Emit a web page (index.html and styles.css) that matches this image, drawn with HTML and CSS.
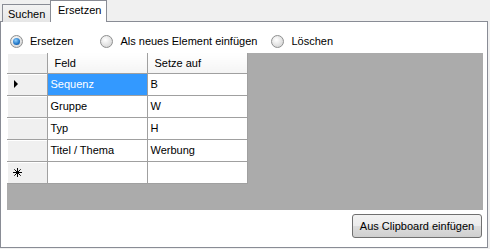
FILE: index.html
```html
<!DOCTYPE html>
<html>
<head>
<meta charset="utf-8">
<title>Ersetzen</title>
<link rel="stylesheet" href="styles.css">
</head>
<body>
<div class="tabs">
    <div class="tab">Suchen</div>
    <div class="tab active">Ersetzen</div>
</div>
<div class="panel">
    <div class="radios">
        <label class="radio checked"><span class="dot"></span>Ersetzen</label>
        <label class="radio"><span class="dot"></span>Als neues Element einfügen</label>
        <label class="radio"><span class="dot"></span>Löschen</label>
    </div>
    <div class="gridarea">
        <table class="grid">
            <tr class="head">
                <th class="rh"></th>
                <th>Feld</th>
                <th>Setze auf</th>
            </tr>
            <tr>
                <td class="rh"><span class="arrow"></span></td>
                <td class="sel">Sequenz</td>
                <td>B</td>
            </tr>
            <tr>
                <td class="rh"></td>
                <td>Gruppe</td>
                <td>W</td>
            </tr>
            <tr>
                <td class="rh"></td>
                <td>Typ</td>
                <td>H</td>
            </tr>
            <tr>
                <td class="rh"></td>
                <td>Titel / Thema</td>
                <td>Werbung</td>
            </tr>
            <tr>
                <td class="rh">
                    <svg class="star" width="9" height="9" viewBox="0 0 9 9">
                        <path d="M4.5 0V9M0 4.5H9M1.3 1.3L7.7 7.7M7.7 1.3L1.3 7.7" stroke="#000" stroke-width="1"/>
                    </svg>
                </td>
                <td></td>
                <td></td>
            </tr>
        </table>
    </div>
    <div class="footer">
        <button class="btn" type="button">Aus Clipboard einfügen</button>
    </div>
</div>
</body>
</html>
```

FILE: styles.css
```css
*{margin:0;padding:0;box-sizing:border-box}
body{
    background:#f0f0f0;
    font-family:"Liberation Sans",Arial,sans-serif;
    font-size:11px;
    color:#000;
}
.tabs{
    display:flex;
    align-items:flex-end;
    height:21px;
    padding-left:2px;
}
.tab{
    width:49px;
    height:18px;
    padding:3px 0 0 5px;
    border:1px solid #898c95;
    border-bottom:none;
    background:linear-gradient(#f3f3f3,#e6e6e6);
    margin-bottom:-1px;
    white-space:nowrap;
}
.tab.active{
    position:relative;
    z-index:1;
    width:57px;
    height:22px;
    margin-left:-1px;
    padding:3px 0 0 7px;
    background:#fff;
}
.panel{
    width:488px;
    height:227px;
    border:1px solid #898c95;
    background:#fff;
    display:flex;
    flex-direction:column;
    padding:12px 0 0 6px;
}
.radios{
    display:flex;
    height:14px;
    align-items:center;
    margin-left:3px;
}
.radio{
    display:flex;
    align-items:center;
    gap:7px;
}
.radio:nth-child(2){margin-left:27px}
.radio:nth-child(3){margin-left:14px}
.dot{
    width:13px;
    height:13px;
    border-radius:50%;
    border:1px solid #8e8f8f;
    background:radial-gradient(circle at 40% 35%,#fff,#e0e0e0 60%,#cfcfcf);
    display:flex;
    align-items:center;
    justify-content:center;
}
.radio.checked .dot::after{
    content:"";
    width:7px;
    height:7px;
    border-radius:50%;
    background:radial-gradient(circle at 40% 35%,#8fd1ff,#1f73c4 60%,#0a4f95);
}
.gridarea{
    margin-top:5px;
    width:476px;
    height:157px;
    background:#ababab;
}
.grid{
    border-collapse:collapse;
    background:#fff;
}
.grid td,.grid th{
    border:1px solid #a0a0a0;
    height:22px;
    padding:0 3px;
    text-align:left;
    font-weight:normal;
    white-space:nowrap;
}
.grid tr:first-child th{border-top:none}
.grid td:first-child,.grid th:first-child{border-left:none}
.grid th{
    height:20px;
    padding-left:7px;
    background:linear-gradient(#fff,#f4f4f4);
}
.grid td{width:100px}
.grid .rh{
    width:40px;
    padding:0;
    background:#f0f0f0;
    box-shadow:inset 1px 1px 0 #fff;
}
.grid .sel{
    background:#3399ff;
    color:#fff;
}
.arrow{
    display:block;
    margin-left:7px;
    width:0;
    height:0;
    border-top:4px solid transparent;
    border-bottom:4px solid transparent;
    border-left:4px solid #000;
}
.star{
    display:block;
    margin-left:6px;
}
.footer{
    display:flex;
    justify-content:flex-end;
    padding:4px 5px 0 0;
}
.btn{
    width:130px;
    height:24px;
    border:1px solid #707070;
    border-radius:3px;
    background:linear-gradient(#f2f2f2 0,#ebebeb 50%,#dddddd 51%,#cfcfcf 100%);
    font-family:"Liberation Sans",Arial,sans-serif;
    font-size:11px;
    color:#000;
}
```
